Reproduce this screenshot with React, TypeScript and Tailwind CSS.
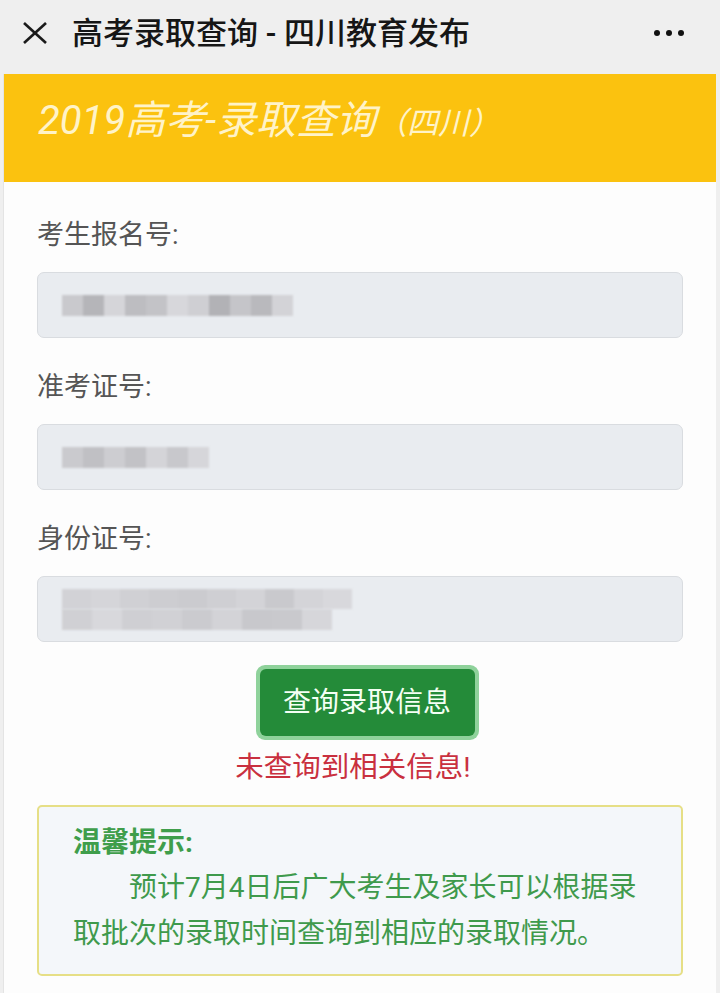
import React from "react";

const cjk = { fontFamily: "Roboto, 'Noto Sans CJK SC', sans-serif" };

const row1 = [
  "bg-[#c9c9cd]", "bg-[#b5b5b9]", "bg-[#d5d5d9]", "bg-[#bdbdc1]", "bg-[#c3c3c7]",
  "bg-[#d7d7db]", "bg-[#cfcfd3]", "bg-[#b2b2b6]", "bg-[#c5c5c9]", "bg-[#b9b9bd]", "bg-[#d3d3d7]",
];
const row2 = [
  "bg-[#cacace]", "bg-[#c0c0c4]", "bg-[#cdcdd1]", "bg-[#c2c2c6]", "bg-[#d4d4d8]", "bg-[#c8c8cc]", "bg-[#d6d6da]",
];
const row3a = [
  "bg-[#d2d2d6]", "bg-[#d5d5d9]", "bg-[#d0d0d4]", "bg-[#cdcdd1]", "bg-[#cbcbcf]", "bg-[#cfcfd3]",
  "bg-[#d3d3d7]", "bg-[#c9c9cd]", "bg-[#d4d4d8]", "bg-[#d8d8dc]",
];
const row3b = [
  "bg-[#d0d0d4]", "bg-[#d8d8dc]", "bg-[#cfcfd3]", "bg-[#d1d1d5]", "bg-[#cbcbcf]", "bg-[#d3d3d7]",
  "bg-[#c8c8cc]", "bg-[#c9c9cd]", "bg-[#d6d6da]",
];

function Mosaic({ cells, w, h }: { cells: string[]; w: string; h: string }) {
  return (
    <div className={`flex blur-[1px] ${h}`}>
      {cells.map((c, i) => (
        <div key={i} className={`${c} ${w} h-full`} />
      ))}
    </div>
  );
}

function Label({ children }: { children: React.ReactNode }) {
  return (
    <div className="text-[27px] leading-[38px] text-[#555] mb-[18px]" style={cjk}>
      {children}
    </div>
  );
}

function InputBox({ children }: { children: React.ReactNode }) {
  return (
    <div className="h-[66px] rounded-[7px] border border-[#d9dce0] bg-[#e9ecf0] flex items-center pl-[24px] mb-[30px]">
      {children}
    </div>
  );
}

export default function App() {
  return (
    <div className="w-[720px] h-[993px] bg-[#efefef] overflow-hidden flex flex-col" style={cjk}>
      {/* top nav */}
      <div className="h-[72px] flex items-center pb-[6px] pl-[22px] pr-[36px] shrink-0">
        <svg width="26" height="22" viewBox="0 0 26 22" className="shrink-0">
          <line x1="2" y1="1" x2="24" y2="21" stroke="#1a1a1a" strokeWidth="2.6" />
          <line x1="24" y1="1" x2="2" y2="21" stroke="#1a1a1a" strokeWidth="2.6" />
        </svg>
        <div className="ml-[24px] text-[31px] leading-none text-[#161616] font-medium whitespace-nowrap">
          高考录取查询 - 四川教育发布
        </div>
        <div className="ml-auto flex gap-[6px] items-center">
          <span className="w-[6px] h-[6px] rounded-full bg-[#111]" />
          <span className="w-[6px] h-[6px] rounded-full bg-[#111]" />
          <span className="w-[6px] h-[6px] rounded-full bg-[#111]" />
        </div>
      </div>

      {/* card */}
      <div className="mt-[2px] ml-[3px] mr-[4px] flex-1 bg-[#fdfdfd] border-l border-[#e4e4e4] flex flex-col">
        <div className="h-[108px] bg-[#fbc20f] flex items-center pl-[34px] pb-[14px] shrink-0">
          <span className="italic text-[#fff3c8] text-[40px] leading-none whitespace-nowrap">
            2019高考-录取查询
            <span className="text-[31px]">（四川）</span>
          </span>
        </div>

        <div className="px-[33px] pt-[34px]">
          <Label>考生报名号:</Label>
          <InputBox>
            <Mosaic cells={row1} w="w-[21px]" h="h-[21px]" />
          </InputBox>

          <Label>准考证号:</Label>
          <InputBox>
            <Mosaic cells={row2} w="w-[21px]" h="h-[21px]" />
          </InputBox>

          <Label>身份证号:</Label>
          <InputBox>
            <div className="flex flex-col">
              <Mosaic cells={row3a} w="w-[29px]" h="h-[20px]" />
              <Mosaic cells={row3b} w="w-[30px]" h="h-[21px]" />
            </div>
          </InputBox>

          <div className="flex justify-center -mt-[7px] pl-[14px]">
            <div className="rounded-[9px] bg-[#8fd29b] p-[4px]">
              <div className="w-[215px] h-[67px] rounded-[6px] bg-[#248b39] flex items-center justify-center text-[28px] text-[#f4fff4]">
                查询录取信息
              </div>
            </div>
          </div>

          <div className="text-center text-[28.5px] leading-[38px] text-[#c9303f] mt-[9px] pr-[14px]">
            未查询到相关信息!
          </div>

          <div className="mt-[18px] border-2 border-[#e6df86] rounded-[5px] bg-[#f4f7fa] pl-[34px] pr-[34px] pt-[14px] pb-[17px]">
            <div className="text-[28px] leading-[44px] font-bold text-[#3f9e4b]">温馨提示:</div>
            <div className="text-[28px] leading-[46px] text-[#3f9a4c] indent-[2em]">
              预计7月4日后广大考生及家长可以根据录取批次的录取时间查询到相应的录取情况。
            </div>
          </div>
        </div>
      </div>
    </div>
  );
}
